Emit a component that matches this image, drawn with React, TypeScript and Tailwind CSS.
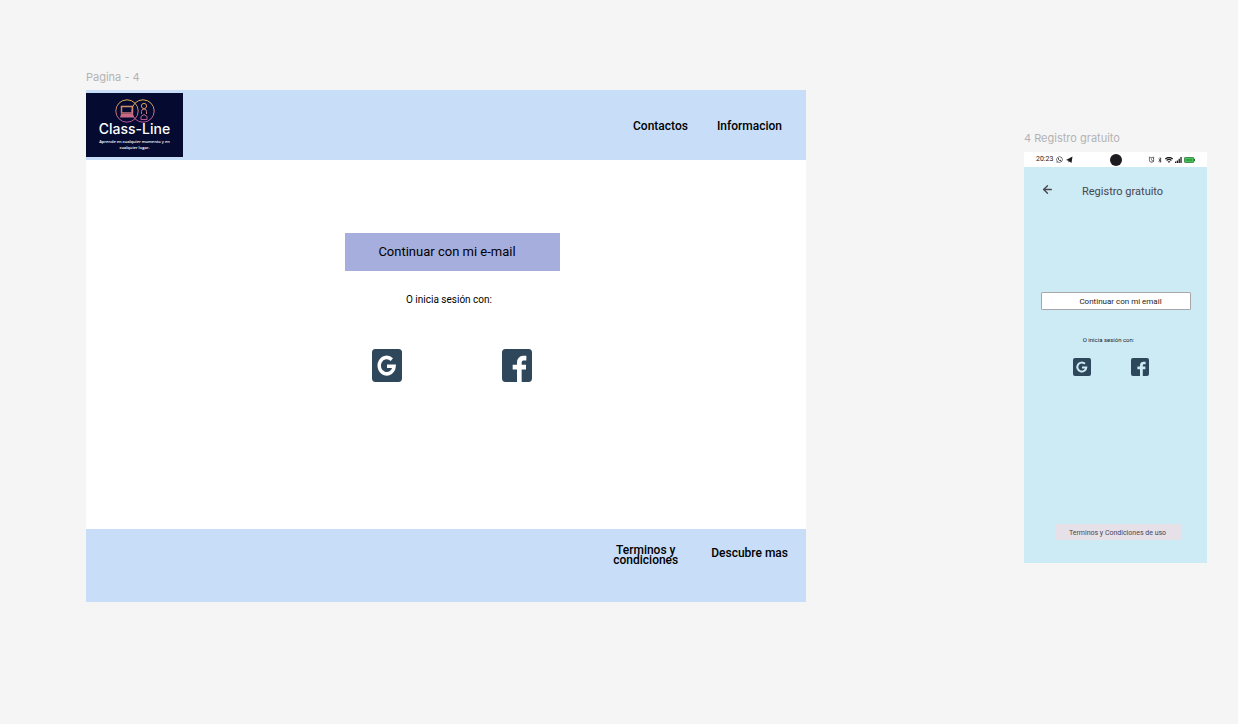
import React from "react";
import { ArrowLeft } from "lucide-react";
import { FaBluetoothB, FaTelegramPlane, FaWhatsapp } from "react-icons/fa";
import { MdAlarm } from "react-icons/md";

const BOX =
  "M5 3H19A2 2 0 0 1 21 5V19A2 2 0 0 1 19 21H5A2 2 0 0 1 3 19V5A2 2 0 0 1 5 3";

function GoogleIcon({ className }: { className: string }) {
  return (
    <svg viewBox="3 3 18 18" preserveAspectRatio="none" className={className} aria-hidden="true">
      <path d={BOX + "Z"} fill="#2f475b" />
      <path
        d="M14.9 8.8A4.5 4.5 0 1 0 16.3 12.4H12"
        fill="none"
        stroke="currentColor"
        strokeWidth="2"
      />
    </svg>
  );
}

function FacebookIcon({ className }: { className: string }) {
  return (
    <svg viewBox="3 3 18 18" preserveAspectRatio="none" className={className} aria-hidden="true">
      <path
        fill="#2f475b"
        d={BOX + "M17.6 6.7H15.5A3.5 3.5 0 0 0 12 10.2V11.6H9.4V14.2H12V21H14.8V14.2H17.4V11.6H14.8V10.3A1 1 0 0 1 15.8 9.3H17.6Z"}
        fillRule="evenodd"
      />
    </svg>
  );
}

function Logo() {
  return (
    <a
      href="#inicio"
      className="mt-[3px] flex h-16 w-[97px] flex-col items-center bg-[#050a30] pt-[6px] text-white"
    >
      <svg viewBox="0 0 40 24" className="h-6 w-10" fill="none" aria-hidden="true">
        <defs>
          <linearGradient id="logo-ring" x1="0" y1="0" x2="0" y2="24" gradientUnits="userSpaceOnUse">
            <stop offset="0" stopColor="#e5b04c" />
            <stop offset="1" stopColor="#b04a9c" />
          </linearGradient>
        </defs>
        <g stroke="url(#logo-ring)">
          <circle cx="12" cy="12" r="11.2" />
          <circle cx="28" cy="12" r="11.2" />
          <path d="M6.5 7.5H17.5V14H6.5Z" strokeWidth="1.5" />
          <circle cx="29" cy="7" r="2.6" />
          <path d="M26.5 15V12.5A2.5 2.5 0 0 1 31.5 12.5V15M26 20.5V17.5L29 15.5L32 17.5V20.5Z" />
        </g>
        <path d="M6 15H18L19 18.5H5Z" fill="#c86a86" />
      </svg>
      <span className="font-['Inter',sans-serif] text-[14px] leading-[11px] font-medium">Class-Line</span>
      <span className="mt-[5px] w-[76px] text-center font-['Open_Sans',sans-serif] text-[4px] leading-[6px] font-semibold">
        Aprende en cualquier momento y en cualquier lugar.
      </span>
    </a>
  );
}

function DesktopFrame() {
  return (
    <section className="mt-[69px] min-w-0 flex-1">
      <h2 className="h-[21px] font-['Inter',sans-serif] text-[11px] leading-4 text-[#b3b3b3]">Pagina - 4</h2>
      <div className="text-black">
        <header className="flex h-[70px] items-start justify-between bg-[#c7ddf8] pr-6">
          <Logo />
          <nav className="flex gap-[29px] pt-7 text-[12px] leading-4 font-medium">
            <a href="#contactos">Contactos</a>
            <a href="#informacion">Informacion</a>
          </nav>
        </header>
        <main className="flex h-[369px] flex-col items-center bg-white pt-[73px] pl-3">
          <button type="button" className="h-[38px] w-[215px] bg-[#a6aedd] pr-[10px] text-[13px]">
            Continuar con mi e-mail
          </button>
          <p className="mt-[21px] pr-[6px] text-[10px] leading-4">O inicia sesión con:</p>
          <div className="mt-[41px] flex gap-[100px]">
            <button type="button" aria-label="Google">
              <GoogleIcon className="h-[33px] w-[30px] text-white" />
            </button>
            <button type="button" aria-label="Facebook">
              <FacebookIcon className="h-[33px] w-[30px]" />
            </button>
          </div>
        </main>
        <footer className="flex h-[73px] justify-end gap-8 bg-[#c7ddf8] pt-4 pr-[18px] text-[12px] font-medium">
          <a href="#terminos" className="w-[67px] text-center leading-[10px]">Terminos y condiciones</a>
          <a href="#descubre" className="leading-4">Descubre mas</a>
        </footer>
      </div>
    </section>
  );
}

function StatusBar() {
  return (
    <div className="grid h-[15px] grid-cols-3 items-center bg-white px-3 text-[#1d1b20]">
      <div className="flex items-center gap-[3px] text-[7px] leading-none">
        <span>20:23</span>
        <FaWhatsapp size={7} />
        <svg viewBox="0 0 7 7" className="size-[7px]" aria-hidden="true">
          <path d="M0 4L6.5 0.5L5.5 7L3.5 5.5L2.5 6.5V4.8Z" fill="currentColor" />
        </svg>
      </div>
      <span className="size-3 justify-self-center rounded-full bg-[#1d1b20]" />
      <div className="flex items-center justify-end gap-[2px]">
        <MdAlarm size={7} />
        <FaBluetoothB size={6} />
        <svg viewBox="0 0 8 6" className="h-[6px] w-2" fill="none" stroke="currentColor" aria-hidden="true">
          <path d="M0.3 2Q4 -1 7.7 2M1.6 3.4Q4 1.4 6.4 3.4" strokeWidth="1.3" />
          <path d="M2.6 4.2H5.4L4 6Z" fill="currentColor" stroke="none" />
        </svg>
        <svg viewBox="0 0 7 6" className="h-[6px] w-[7px]" fill="currentColor" aria-hidden="true">
          <path d="M0 4.5H1.3V6H0ZM1.8 3.4H3.1V6H1.8ZM3.6 1.8H4.9V6H3.6ZM5.4 0H6.7V6H5.4Z" />
        </svg>
        <svg viewBox="0 0 11 6" className="h-[6px] w-[11px]" aria-hidden="true">
          <rect x="0.4" y="0.4" width="9.4" height="5.2" rx="1" fill="#43c759" stroke="#23662e" strokeWidth="0.8" />
          <path d="M10 2H11V4H10Z" fill="#23662e" />
          <path d="M3 2V4M5 2V4M7 2V4" stroke="#23662e" strokeWidth="0.8" />
        </svg>
      </div>
    </div>
  );
}

function PhoneFrame() {
  return (
    <section className="mt-[130px] w-[183px] shrink-0">
      <h2 className="h-[22px] font-['Inter',sans-serif] text-[11px] leading-4 text-[#b3b3b3]">
        4 Registro gratuito
      </h2>
      <StatusBar />
      <main className="flex h-[396px] flex-col items-center bg-[#cdebf5] pt-4">
        <div className="flex w-full items-start gap-7 pl-[17px] text-[#49454f]">
          <button type="button" aria-label="Volver">
            <ArrowLeft size={13} strokeWidth={2.5} />
          </button>
          <h3 className="pt-px text-[11px] leading-4">Registro gratuito</h3>
        </div>
        <button
          type="button"
          className="mt-[92px] h-[18px] w-[150px] rounded-[1px] border border-[#aaa5aa] bg-white pt-px pl-[10px] text-[8px] leading-[15px] text-[#1d1b20]"
        >
          Continuar con mi email
        </button>
        <p className="mt-[26px] pr-[14px] text-[6px] leading-2 text-[#1d1b20]">O inicia sesión con:</p>
        <div className="mt-[14px] flex gap-10 pr-[10px]">
          <button type="button" aria-label="Google">
            <GoogleIcon className="size-[18px] text-[#cdebf5]" />
          </button>
          <button type="button" aria-label="Facebook">
            <FacebookIcon className="size-[18px]" />
          </button>
        </div>
        <a
          href="#condiciones"
          className="mt-auto mb-[23px] ml-[6px] h-4 w-[126px] bg-[#e6e0e9] pt-px pr-[2px] text-center text-[7px] leading-4 text-[#49454f]"
        >
          Terminos y Condiciones de uso
        </a>
      </main>
    </section>
  );
}

export default function App() {
  return (
    <div className="flex min-h-screen items-start gap-[218px] bg-[#f5f5f5] pr-[31px] pl-[86px] font-['Roboto',sans-serif]">
      <DesktopFrame />
      <PhoneFrame />
    </div>
  );
}
